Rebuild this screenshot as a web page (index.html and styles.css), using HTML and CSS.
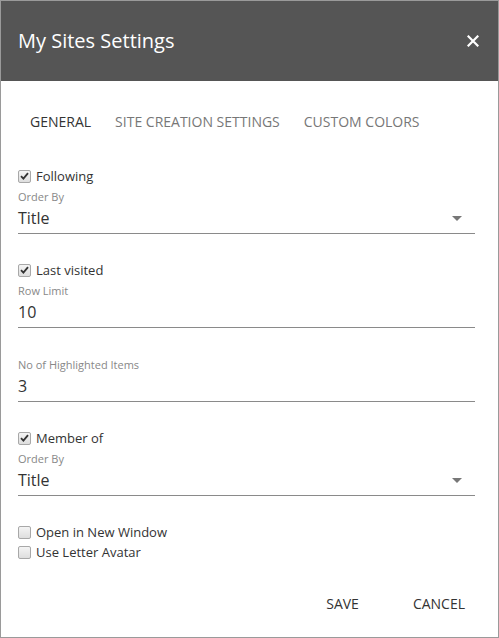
FILE: index.html
```html
<!DOCTYPE html>
<html>
<head>
<meta charset="utf-8">
<link rel="stylesheet" href="styles.css">
</head>
<body>
<div class="dialog">
  <header class="header">
    <h1 class="title">My Sites Settings</h1>
    <span class="close" aria-label="close">
      <svg width="12" height="12" viewBox="0 0 12 12"><path d="M1.5 1.5 L10.5 10.5 M10.5 1.5 L1.5 10.5" stroke="#fff" stroke-width="2.2" stroke-linecap="square"/></svg>
    </span>
  </header>
  <nav class="tabs">
    <span class="tab active">GENERAL</span>
    <span class="tab">SITE CREATION SETTINGS</span>
    <span class="tab">CUSTOM COLORS</span>
  </nav>
  <main class="form">
    <section class="group">
      <div class="check-row"><span class="cb checked"><svg width="9" height="8" viewBox="0 0 9 8"><path d="M1 4.2 L3.4 6.6 L8 1.2" stroke="#333" stroke-width="1.8" fill="none"/></svg></span><span class="check-label">Following</span></div>
      <div class="field-label">Order By</div>
      <div class="input select"><span>Title</span><span class="arrow"></span></div>
    </section>
    <section class="group">
      <div class="check-row"><span class="cb checked"><svg width="9" height="8" viewBox="0 0 9 8"><path d="M1 4.2 L3.4 6.6 L8 1.2" stroke="#333" stroke-width="1.8" fill="none"/></svg></span><span class="check-label">Last visited</span></div>
      <div class="field-label">Row Limit</div>
      <div class="input"><span>10</span></div>
    </section>
    <section class="group tight">
      <div class="field-label">No of Highlighted Items</div>
      <div class="input"><span>3</span></div>
    </section>
    <section class="group">
      <div class="check-row"><span class="cb checked"><svg width="9" height="8" viewBox="0 0 9 8"><path d="M1 4.2 L3.4 6.6 L8 1.2" stroke="#333" stroke-width="1.8" fill="none"/></svg></span><span class="check-label">Member of</span></div>
      <div class="field-label">Order By</div>
      <div class="input select"><span>Title</span><span class="arrow"></span></div>
    </section>
    <section class="group opts">
      <div class="check-row"><span class="cb"></span><span class="check-label">Open in New Window</span></div>
      <div class="check-row"><span class="cb"></span><span class="check-label">Use Letter Avatar</span></div>
    </section>
  </main>
  <footer class="footer">
    <span class="btn">SAVE</span>
    <span class="btn">CANCEL</span>
  </footer>
</div>
</body>
</html>
```
FILE: styles.css
```css
* { box-sizing: border-box; }
html, body { margin: 0; padding: 0; }
body {
  font-family: "Open Sans", "Noto Sans", sans-serif;
  color: #333;
  background: #fff;
}
.dialog {
  width: 499px;
  height: 638px;
  border: 1px solid #9a9a9a;
  display: flex;
  flex-direction: column;
}
.header {
  height: 80px;
  background: #555555;
  display: flex;
  align-items: center;
  justify-content: space-between;
  padding: 0 19px 0 17px;
  flex-shrink: 0;
}
.title {
  margin: 0;
  font-size: 20px;
  font-weight: 400;
  color: #fff;
  line-height: 28px;
}
.close {
  display: flex;
  width: 12px;
  height: 12px;
}
.tabs {
  display: flex;
  padding: 30px 0 0 17px;
  height: 85px;
  flex-shrink: 0;
}
.tab {
  font-size: 14px;
  line-height: 22px;
  padding: 0 12px;
  color: #777;
}
.tab.active { color: #333; }
.form {
  padding: 0 23px 0 17px;
  display: flex;
  flex-direction: column;
}
.group { display: flex; flex-direction: column; margin-bottom: 26px; }
.group.tight { margin-top: 0; margin-bottom: 26px; }
.group.opts { margin-bottom: 0; }
.check-row {
  display: flex;
  align-items: center;
  height: 20px;
}
.cb {
  width: 13px;
  height: 13px;
  border: 1px solid #a8a8a8;
  border-radius: 2px;
  background: linear-gradient(#f4f4f4, #dedede);
  display: flex;
  align-items: center;
  justify-content: center;
  margin-right: 5px;
  flex-shrink: 0;
}
.check-label {
  font-size: 13px;
  color: #333;
}
.field-label {
  margin-top: 3px;
  font-size: 11px;
  line-height: 16px;
  color: #888;
}
.input {
  height: 29px;
  border-bottom: 1px solid #8a8a8a;
  display: flex;
  align-items: center;
  justify-content: space-between;
  font-size: 16px;
  color: #333;
  padding-bottom: 2px;
}
.arrow {
  width: 0;
  height: 0;
  border-left: 5px solid transparent;
  border-right: 5px solid transparent;
  border-top: 5px solid #777;
  margin-right: 13px;
}
.footer {
  margin-top: auto;
  display: flex;
  justify-content: flex-end;
  align-items: center;
  gap: 22px;
  padding: 0 17px 17px 0;
}
.btn {
  font-size: 14px;
  line-height: 22px;
  padding: 5px 16px;
  color: #333;
}
```
